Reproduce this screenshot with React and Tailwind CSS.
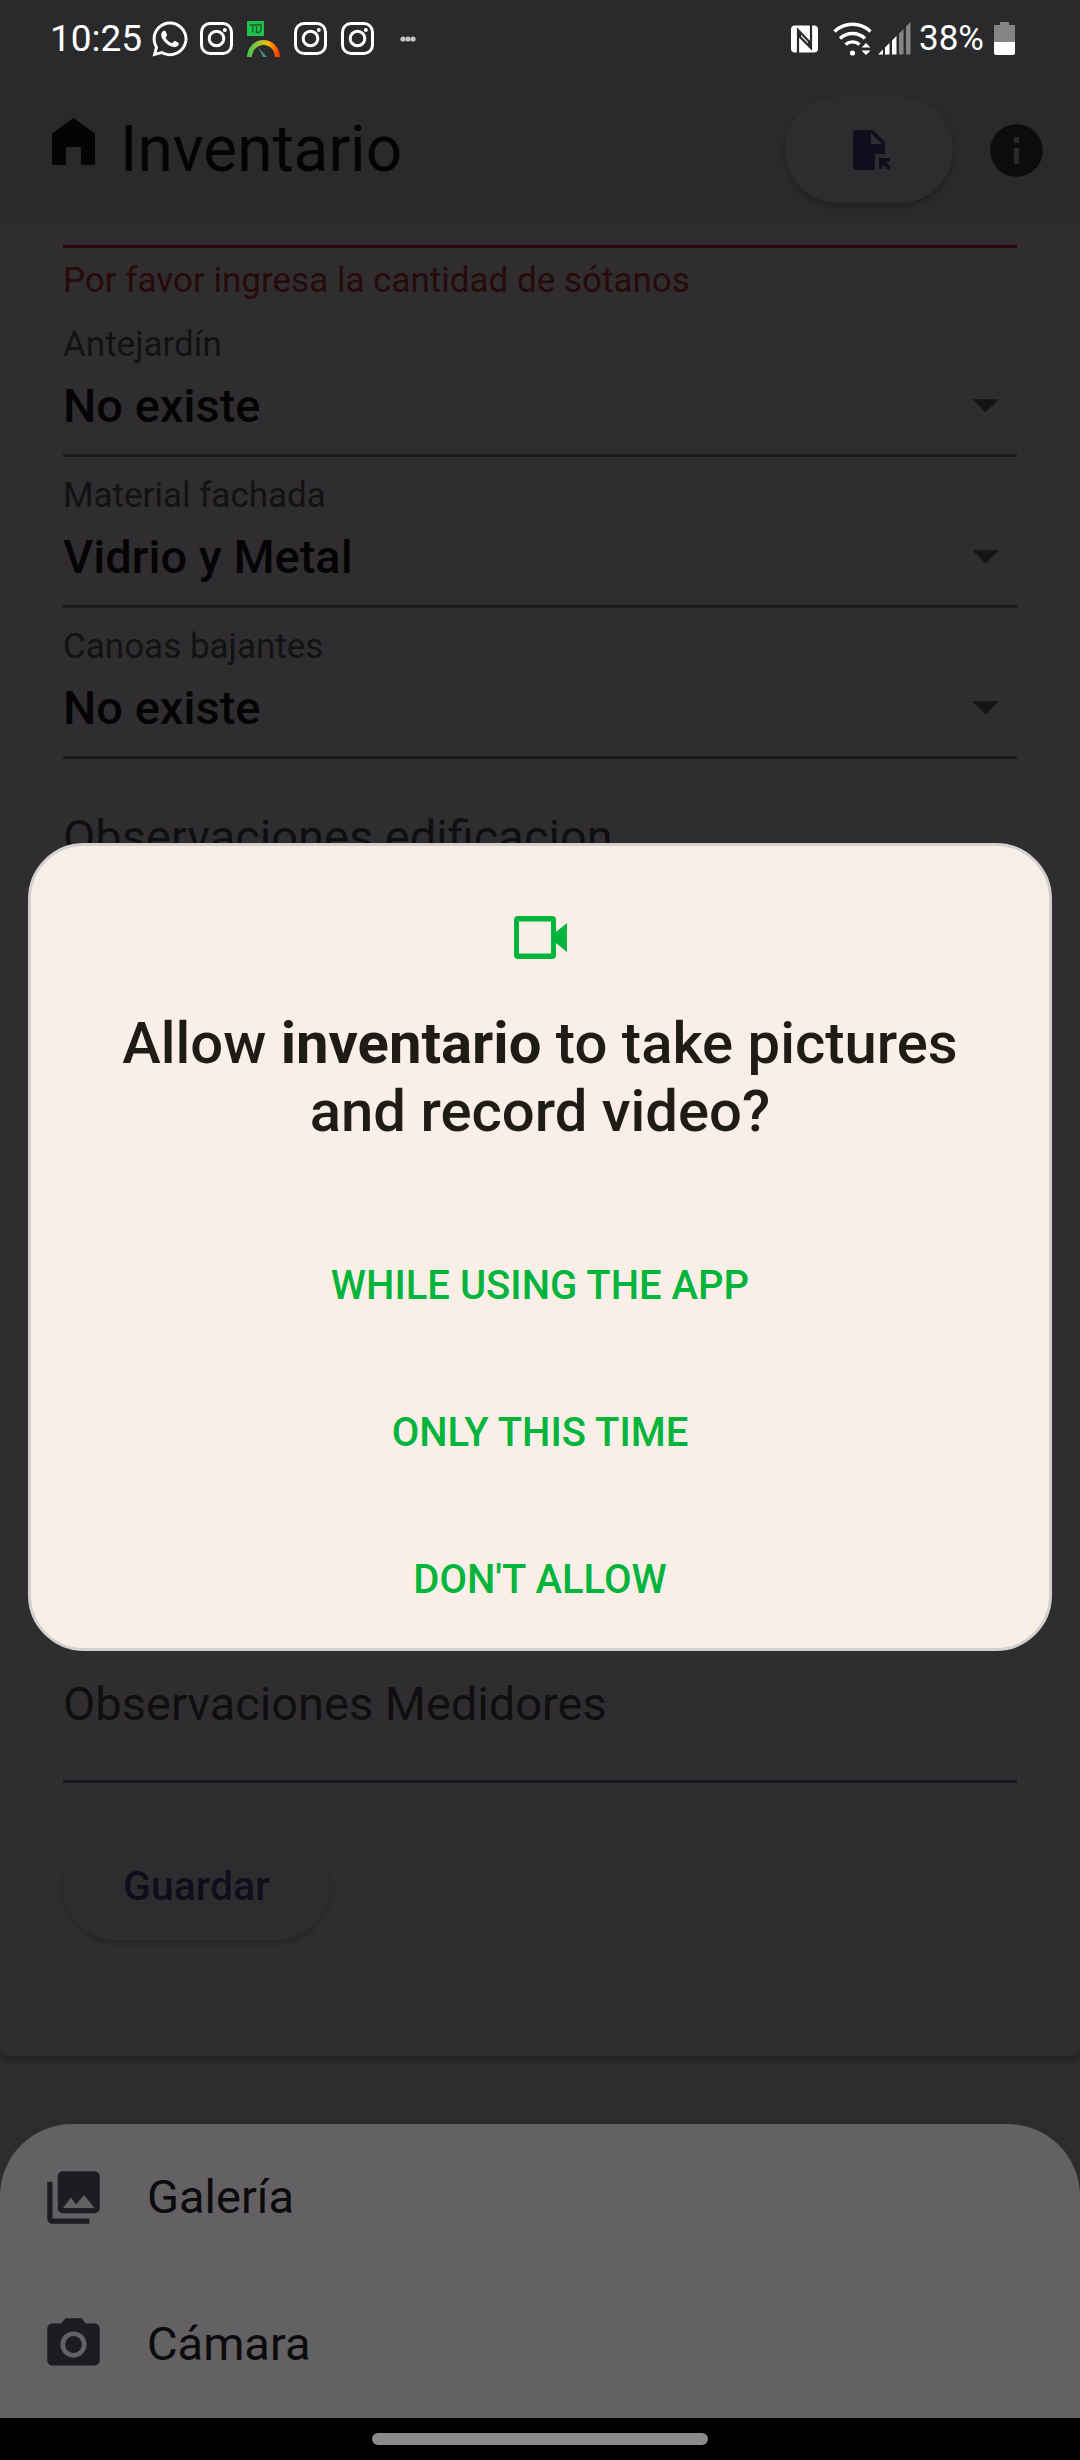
import { FaWhatsapp } from "react-icons/fa";
import {
  MdArrowDropDown,
  MdInfo,
  MdPhotoCamera,
  MdPhotoLibrary,
} from "react-icons/md";

function InstagramGlyph() {
  return (
    <svg viewBox="0 0 33 33" className="size-[33px]" fill="none" stroke="white" aria-hidden="true">
      <rect x="1.5" y="1.5" width="30" height="30" rx="8.5" strokeWidth="3" />
      <circle cx="16.5" cy="16.5" r="7.3" strokeWidth="3" />
      <circle cx="24.8" cy="8" r="2" fill="white" stroke="none" />
    </svg>
  );
}

function SpeedGlyph() {
  return (
    <svg viewBox="0 0 33 36" className="h-9 w-[33px]" fill="none" aria-hidden="true">
      <defs>
        <linearGradient id="gauge" x1="0" x2="1">
          <stop offset="0" stopColor="#3cc24a" />
          <stop offset="0.3" stopColor="#8dc63f" />
          <stop offset="0.65" stopColor="#f7b500" />
          <stop offset="1" stopColor="#ff2a00" />
        </linearGradient>
      </defs>
      <rect width="17" height="15" fill="#1fc24a" />
      <path d="M2.500 4H9M5.800 4V11.500M9.500 4V11.500H12L14 9.500V3.500H9.500" stroke="#17602c" strokeWidth="1.4" />
      <path d="M0 36A16.5 17 0 0 1 33 36H28A11.5 12 0 0 0 5 36Z" fill="url(#gauge)" />
      <path d="M11 26L20 36H16Z" fill="#3d8f88" />
    </svg>
  );
}

function NfcGlyph() {
  return (
    <svg viewBox="0 0 27 28" className="h-7 w-[27px]" aria-hidden="true">
      <rect x="0" y="0.5" width="27" height="27" rx="4" fill="white" />
      <path d="M7 28V5L18 16.500V20.500" fill="none" stroke="#2a2a2c" strokeWidth="2.200" />
      <path d="M20 0V23L9 12V8" fill="none" stroke="#2a2a2c" strokeWidth="2.200" />
    </svg>
  );
}

function WifiGlyph() {
  return (
    <svg viewBox="0 0 40 34" className="h-[34px] w-10" fill="none" stroke="white" strokeWidth="3.4" aria-hidden="true">
      <path d="M1.500 9.500A26 26 0 0 1 37.500 9.500" />
      <path d="M7 16.500A18 18 0 0 1 32 16.500" />
      <path d="M12.500 22.500A10.500 10.500 0 0 1 26.500 22.500" />
      <circle cx="19.500" cy="31" r="2.600" fill="white" stroke="none" />
      <path d="M28.500 25.500L33 21L37.500 25.500ZM28.500 28.500L33 33L37.500 28.500Z" fill="white" stroke="none" />
    </svg>
  );
}

function SignalGlyph() {
  return (
    <svg viewBox="0 0 33 33" className="size-[33px]" aria-hidden="true">
      <path d="M0 32.500L5 27.500V32.500ZM7 25.500L11.500 21V32.500H7ZM14 18.500L18.500 14V32.500H14Z" fill="white" />
      <path d="M21 11.500L25.500 7V32.500H21ZM28 4.500L32.500 0V32.500H28Z" fill="#858585" />
    </svg>
  );
}

function BatteryGlyph() {
  return (
    <svg viewBox="0 0 21 33" className="h-[33px] w-[21px]" aria-hidden="true">
      <path d="M6 0H15V3H21V20H0V3H6Z" fill="#858585" />
      <path d="M0 20H21V31Q21 33 19 33H2Q0 33 0 31Z" fill="white" />
    </svg>
  );
}

function HomeGlyph() {
  return (
    <svg viewBox="0 0 43 47" className="h-[47px] w-[43px]" fill="#040404" aria-hidden="true">
      <path d="M21.500 0L43 15.500V47H29V29H14V47H0V15.500Z" />
    </svg>
  );
}

function FileGlyph() {
  return (
    <svg viewBox="-6 0 44 40" className="h-10 w-11" fill="#120d1d" aria-hidden="true">
      <path fillRule="evenodd" d="M4 0H20L32 12V24H22V40H4Q0 40 0 36V4Q0 0 4 0ZM18 3V14H29Z" />
      <path d="M26 28H37V31.500H32.500L38 37L35.500 40L29.500 34V39H26Z" />
    </svg>
  );
}

function VideoGlyph() {
  return (
    <svg viewBox="0 0 53 43" className="h-[43px] w-[53px]" fill="#00b43c" aria-hidden="true">
      <path fillRule="evenodd" d="M4 0H38Q42 0 42 4V16L53 7V36L42 27V39Q42 43 38 43H4Q0 43 0 39V4Q0 0 4 0ZM5 5.500V37.500H37V5.500Z" />
    </svg>
  );
}

function StatusBar() {
  return (
    <div className="flex h-[77px] items-center justify-between pr-[65px] pl-[50px] text-white">
      <div className="flex items-center gap-[14px]">
        <span className="text-[37px] leading-none">10:25</span>
        <div className="-ml-[6px] flex items-center gap-[14px]">
          <FaWhatsapp className="-mr-1 size-10" aria-hidden="true" />
          <InstagramGlyph />
          <SpeedGlyph />
          <InstagramGlyph />
          <InstagramGlyph />
        </div>
        <svg viewBox="0 0 16 6" className="ml-3 h-[6px] w-4" fill="#c4c4c4" aria-hidden="true">
          <circle cx="3" cy="3" r="2.600" />
          <circle cx="8" cy="3" r="2.600" />
          <circle cx="13" cy="3" r="2.600" />
        </svg>
      </div>
      <div className="flex items-center">
        <NfcGlyph />
        <span className="ml-[15px]"><WifiGlyph /></span>
        <span className="ml-[5px]"><SignalGlyph /></span>
        <span className="ml-2 text-[35px] leading-none">38%</span>
        <span className="ml-[10px]"><BatteryGlyph /></span>
      </div>
    </div>
  );
}

function SelectField({ id, label, value }) {
  return (
    <div className="flex h-[151px] flex-col border-b-[3px] border-[#1a191b]">
      <label htmlFor={id} className="mt-[18px] text-[35px] leading-[42px] text-[#121213]">
        {label}
      </label>
      <div className="relative mt-[10px]">
        <select
          id={id}
          defaultValue={value}
          className="block h-[60px] w-full appearance-none bg-transparent text-[47px] leading-[60px] font-medium text-[#040404] outline-none"
        >
          <option>{value}</option>
        </select>
        <MdArrowDropDown className="pointer-events-none absolute right-0 bottom-0 size-[63px] text-[#141414]" aria-hidden="true" />
      </div>
    </div>
  );
}

function SheetItem({ Icon, label }) {
  return (
    <button type="button" className="flex h-[147px] w-full items-center gap-[42px] px-[42px] text-left text-[47px] text-[#0b0b0c]">
      <Icon className="size-[63px] text-[#1d1c20]" aria-hidden="true" />
      {label}
    </button>
  );
}

const fields = [
  { id: "antejardin", label: "Antejardín", value: "No existe" },
  { id: "fachada", label: "Material fachada", value: "Vidrio y Metal" },
  { id: "canoas", label: "Canoas bajantes", value: "No existe" },
];

const choices = ["WHILE USING THE APP", "ONLY THIS TIME", "DON'T ALLOW"];

export default function App() {
  return (
    <div className="relative flex min-h-screen flex-col bg-[#302d30] font-[Roboto,sans-serif]">
      <header className="relative z-10 bg-[#2a2a2c]">
        <StatusBar />
        <div className="flex h-[146px] items-center pr-8 pl-[52px]">
          <span className="pb-[18px]"><HomeGlyph /></span>
          <h1 className="ml-[25px] text-[64px] leading-none text-[#040404]">Inventario</h1>
          <button
            type="button"
            aria-label="Exportar archivo"
            className="ml-auto flex h-[106px] w-[168px] items-center justify-center rounded-full bg-[#2d2d2f] shadow-[0_3px_5px_rgba(0,0,0,0.25)]"
          >
            <FileGlyph />
          </button>
          <button type="button" aria-label="Información" className="ml-8">
            <MdInfo className="size-[63px] text-[#0c0c0c]" />
          </button>
        </div>
      </header>

      <main className="flex grow flex-col rounded-b-lg px-[63px] shadow-[0_4px_10px_rgba(20,24,20,0.6)]">
        <p className="mt-[22px] border-t-[3px] border-[#2a0a0b] pt-[10px] text-[35px] leading-[45px] text-[#270a0a]">
          Por favor ingresa la cantidad de sótanos
        </p>
        <div className="mt-[3px]">
          {fields.map((f) => (
            <SelectField key={f.id} {...f} />
          ))}
        </div>
        <input
          type="text"
          aria-label="Observaciones edificacion"
          placeholder="Observaciones edificacion"
          className="mt-[46px] h-[64px] w-full bg-transparent text-[47px] outline-none placeholder:text-[#0f0f10] placeholder:opacity-100"
        />
        <input
          type="text"
          aria-label="Observaciones Medidores"
          placeholder="Observaciones Medidores"
          className="mt-auto h-[156px] w-full border-b-[3px] border-[#18161a] bg-transparent text-[47px] outline-none placeholder:text-[#0f0f10] placeholder:opacity-100"
        />
        <button
          type="button"
          className="mt-[50px] mb-[116px] h-[107px] self-start rounded-full bg-[#2d2d2f] px-[60px] text-[41px] font-medium text-[#120d1d] shadow-[0_3px_5px_rgba(20,24,20,0.4)]"
        >
          Guardar
        </button>
      </main>

      <section aria-label="Origen de la imagen" className="mt-[68px] rounded-t-[72px] bg-[#636164] shadow-[0_-9px_10px_rgba(42,45,44,0.8)]">
        <SheetItem Icon={MdPhotoLibrary} label="Galería" />
        <SheetItem Icon={MdPhotoCamera} label="Cámara" />
      </section>
      <div className="flex h-[42px] items-center justify-center bg-black">
        <div className="h-3 w-[336px] rounded-full bg-[#8b8b8b]" />
      </div>

      <div className="absolute inset-0 z-20 flex items-center px-7 pt-[34px]">
        <div
          role="dialog"
          aria-labelledby="permission-title"
          className="flex w-full flex-col items-center rounded-[56px] border-[3px] border-[#d2d1d0] bg-[#faefe6] pt-[70px] pb-[10px]"
        >
          <VideoGlyph />
          <h2 id="permission-title" className="mt-[50px] max-w-[860px] text-center text-[58px] leading-[68px] font-medium text-[#1f1b16]">
            Allow <b className="font-bold">inventario</b> to take pictures and record video?
          </h2>
          <div className="mt-[82px] flex w-full flex-col gap-[30px]">
            {choices.map((c) => (
              <button key={c} type="button" className="h-[117px] text-[40px] font-medium text-[#00b43c]">
                {c}
              </button>
            ))}
          </div>
        </div>
      </div>
    </div>
  );
}
